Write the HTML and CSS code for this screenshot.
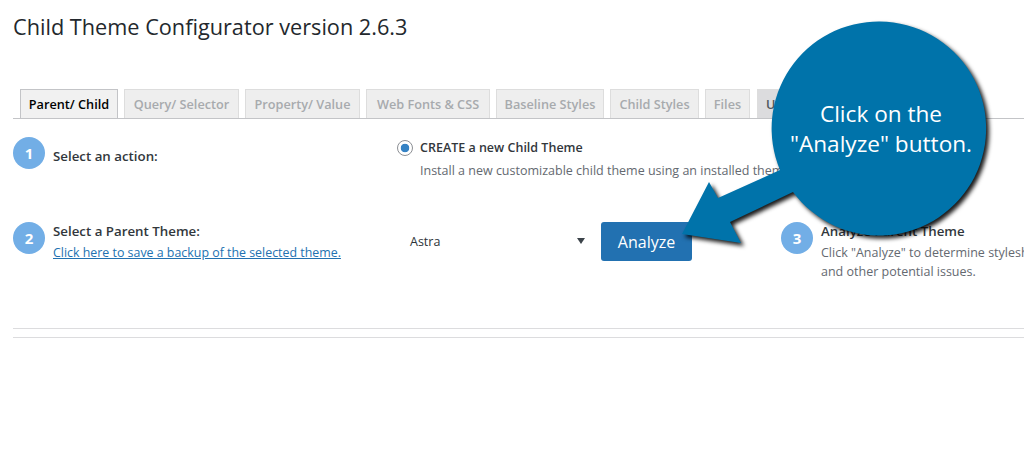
FILE: index.html
```html
<!DOCTYPE html>
<html lang="en">
<head>
<meta charset="utf-8">
<title>Child Theme Configurator</title>
<link rel="stylesheet" href="styles.css">
</head>
<body>
<main class="page">
  <h1 class="title">Child Theme Configurator version 2.6.3</h1>
  <nav class="tabs">
    <a class="tab tab-active tab-parent">Parent/ Child</a>
    <a class="tab tab-query">Query/ Selector</a>
    <a class="tab tab-prop">Property/ Value</a>
    <a class="tab tab-web">Web Fonts &amp; CSS</a>
    <a class="tab tab-base">Baseline Styles</a>
    <a class="tab tab-child">Child Styles</a>
    <a class="tab tab-files">Files</a>
    <a class="tab tab-upgrade">Upgrade</a>
  </nav>
  <section class="row row-action">
    <div class="lead">
      <span class="step">1</span>
      <strong class="label label-lead label-low">Select an action:</strong>
    </div>
    <div class="option">
      <span class="radio"></span>
      <div class="option-text">
        <strong class="label">CREATE a new Child Theme</strong>
        <p class="hint">Install a new customizable child theme using an installed theme as a parent.</p>
      </div>
    </div>
  </section>
  <section class="row row-parent">
    <div class="lead lead-top">
      <span class="step">2</span>
      <div class="lead-text">
        <strong class="label label-lead">Select a Parent Theme:</strong>
        <a class="link">Click here to save a backup of the selected theme.</a>
      </div>
    </div>
    <div class="select"><span>Astra</span><i class="caret"></i></div>
    <button class="analyze" type="button">Analyze</button>
    <div class="lead lead-top lead-three">
      <span class="step">3</span>
      <div class="lead-text">
        <strong class="label label-lead">Analyze Parent Theme</strong>
        <p class="hint hint-multi">Click "Analyze" to determine stylesheet dependencies<br>and other potential issues.</p>
      </div>
    </div>
  </section>
  <hr class="rule rule-first">
  <hr class="rule rule-second">
</main>
<aside class="callout">
  <svg class="callout-shape" width="1024" height="456" viewBox="0 0 1024 456" aria-hidden="true">
    <path d="M880 21.500 A107 107 0 1 1 793 192 L730 222 L741 243 L682 234 L709 182 L718 198 L780 170 A107 107 0 0 1 880 21.500 Z" fill="#0073aa"/>
  </svg>
  <p class="callout-text">Click on the<br>"Analyze" button.</p>
</aside>
</body>
</html>
```
FILE: styles.css
```css
* { box-sizing: border-box; }
html, body { margin: 0; height: 456px; overflow: hidden; background: #fff; }
body { font-family: "Open Sans", "Noto Sans", sans-serif; color: #32373c; position: relative; }
.page { padding: 0 0 0 13px; width: 1200px; }
.title { margin: 0; padding-top: 12px; height: 89px; font-size: 21.700px; line-height: 30px; font-weight: 400; color: #23282d; }
.tabs { display: flex; gap: 6px; width: 1011px; height: 30px; padding-left: 7px; border-bottom: 1px solid #c3c4c7; overflow: hidden; }
.tab { display: block; height: 30px; text-align: center; font-size: 12.700px; line-height: 29px; font-weight: 600; color: #a7aaad; background: #eee; border: 1px solid #ddd; border-bottom: 0; white-space: nowrap; }
.tab-active { background: #f1f1f1; color: #000; border-color: #c3c4c7; }
.tab-parent { width: 98px; }
.tab-query { width: 115px; }
.tab-prop { width: 115px; }
.tab-web { width: 124px; }
.tab-base { width: 108px; }
.tab-child { width: 89px; }
.tab-files { width: 45px; }
.tab-upgrade { width: 90px; margin-left: 1px; padding-left: 8px; text-align: left; background: #dcdcde; color: #50575e; }
.row { display: flex; }
.row-action { margin-top: 18px; height: 85px; }
.row-parent { height: 106px; }
.lead { width: 384px; display: flex; align-items: center; gap: 8px; height: 32px; }
.lead-top { align-items: flex-start; height: auto; }
.lead-three { width: 400px; margin-left: 89px; }
.step { flex: none; width: 32px; height: 32px; border-radius: 50%; background: #72aee6; color: #fff; font-size: 15px; font-weight: 700; line-height: 32px; text-align: center; }
.label { display: block; font-size: 12.500px; line-height: 18px; font-weight: 600; color: #32373c; white-space: nowrap; }
.label-lead { font-size: 13.300px; }
.label-low { margin-top: 6px; }
.lead-text { margin-top: 0; }
.link { display: block; margin-top: 4px; font-size: 12.400px; line-height: 18px; color: #2271b1; text-decoration: underline; white-space: nowrap; }
.option { display: flex; gap: 7px; margin-top: 2px; }
.radio { flex: none; width: 16px; height: 16px; margin-top: 1px; border: 1px solid #8c8f94; border-radius: 50%; background: radial-gradient(circle, #3582c4 0 4px, #fff 4.600px); }
.option-text { width: 560px; }
.hint { margin: 4px 0 0; font-size: 12.500px; line-height: 19px; color: #646970; white-space: nowrap; }
.hint-multi { margin-top: 3px; }
.select { width: 204px; height: 39px; padding: 0 0 0 13px; display: flex; align-items: center; font-size: 12.500px; color: #2c3338; position: relative; }
.caret { position: absolute; left: 180px; top: 16px; width: 0; height: 0; border-left: 4px solid transparent; border-right: 4px solid transparent; border-top: 6px solid #3c434a; }
.analyze { width: 91px; height: 39px; padding: 0; border: 0; border-radius: 3px; background: #2271b1; color: #fff; font-family: inherit; font-size: 16px; }
.rule { display: block; width: 1011px; margin: 0; border: 0; border-top: 1px solid #dcdcde; }
.rule-second { margin-top: 8px; }
.callout { position: absolute; inset: 0; pointer-events: none; }
.callout-shape { display: block; filter: drop-shadow(3px 3px 2px rgba(0, 0, 0, .9)); }
.callout-text { position: absolute; left: 773px; top: 99px; width: 216px; margin: 0; text-align: center; color: #fff; font-size: 22.600px; line-height: 30px; }
```
